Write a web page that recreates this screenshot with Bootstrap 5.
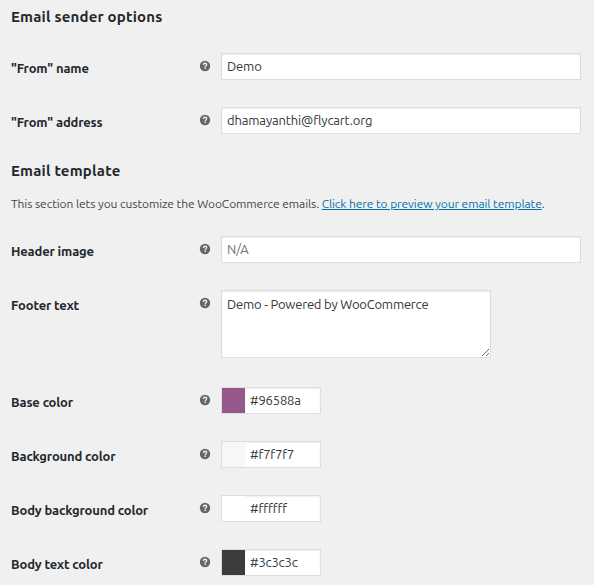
<!DOCTYPE html>
<html lang="en">
<head>
<meta charset="utf-8">
<meta name="viewport" content="width=device-width, initial-scale=1">
<title>Email settings</title>
<link href="https://cdn.jsdelivr.net/npm/bootstrap@5.3.0/dist/css/bootstrap.min.css" rel="stylesheet">
<style>
body { background: #f0f0f0; color: #23282d; font-family: Ubuntu, "Noto Sans", sans-serif; font-size: 13px; overflow: hidden; }
.settings { padding: 7px 13px 0 11px; }
.section-title { font-size: 15px; line-height: 20px; font-weight: 700; white-space: nowrap; letter-spacing: .19px; }
.fields { display: flex; flex-direction: column; gap: 27px; }
.field-label { width: 189px; font-size: 13px; line-height: 17px; padding-top: 7px; font-weight: 700; letter-spacing: -.15px; }
.help-tip { width: 21px; padding-top: 8px; line-height: 0; }
.help-tip svg { display: block; width: 10px; height: 10px; overflow: visible; }
.form-control.wc-input { height: 27px; padding: 1px 5px 2px; font-size: 13px; line-height: 20px; color: #32373c; border: 1px solid #ddd; border-radius: 0; background: #fff; box-shadow: inset 0 1px 2px rgba(0,0,0,.07); letter-spacing: -.14px; }
.form-control.wc-input::placeholder { color: #72777c; opacity: 1; }
textarea.form-control.wc-input { width: 270px; height: 68px; min-height: 0; padding-top: 3px; letter-spacing: -.2px; resize: both; flex: none; }
.color-field { width: 100px; }
.swatch { width: 24px; height: 27px; border: 1px solid #ddd; border-right: 0; flex: none; }
.color-field .form-control.wc-input { border-left: 0; letter-spacing: -.16px; }
.colors { margin-top: 29px; }
.description { font-size: 12px; line-height: 18px; padding: 14px 0 23px; color: #444; white-space: nowrap; letter-spacing: -.085px; }
.description a { color: #0073aa; }
.c-base { background: #96588a; } .c-back { background: #f7f7f7; } .c-body { background: #fff; } .c-text { background: #3c3c3c; }
.title-gap { margin-bottom: 26px; }
.title-template { margin: 27px 0 0; }
</style>
</head>
<body>
<svg width="0" height="0" class="position-absolute" aria-hidden="true">
  <symbol id="help" viewBox="0 0 10 10" overflow="visible"><circle cx="5" cy="5" r="5.2" fill="#666"/><path d="M3.4 3.9C3.4 2.8 4.1 2.2 5.1 2.2S6.7 2.8 6.7 3.6C6.7 4.7 5.2 4.7 5.2 6" fill="none" stroke="#f0f0f0" stroke-width="1.35"/><path d="M4.5 6.6h1.4V8H4.5z" fill="#f0f0f0"/></symbol>
</svg>
<main class="settings">
  <h2 class="section-title title-gap">Email sender options</h2>
  <div class="fields">
    <div class="d-flex align-items-start"><label class="field-label flex-shrink-0" for="f1">"From" name</label><span class="help-tip flex-shrink-0"><svg><use href="#help"/></svg></span><input id="f1" class="form-control wc-input" value="Demo"></div>
    <div class="d-flex align-items-start"><label class="field-label flex-shrink-0" for="f2">"From" address</label><span class="help-tip flex-shrink-0"><svg><use href="#help"/></svg></span><input id="f2" class="form-control wc-input" value="dhamayanthi@flycart.org" spellcheck="false"></div>
  </div>
  <h2 class="section-title title-template">Email template</h2>
  <p class="description m-0">This section lets you customize the WooCommerce emails. <a href="#">Click here to preview your email template</a>.</p>
  <div class="fields">
    <div class="d-flex align-items-start"><label class="field-label flex-shrink-0" for="f3">Header image</label><span class="help-tip flex-shrink-0"><svg><use href="#help"/></svg></span><input id="f3" class="form-control wc-input" placeholder="N/A"></div>
    <div class="d-flex align-items-start"><label class="field-label flex-shrink-0" for="f4">Footer text</label><span class="help-tip flex-shrink-0"><svg><use href="#help"/></svg></span><textarea id="f4" class="form-control wc-input" spellcheck="false">Demo - Powered by WooCommerce</textarea></div>
  </div>
  <div class="fields colors">
    <div class="d-flex align-items-start"><label class="field-label flex-shrink-0" for="f5">Base color</label><span class="help-tip flex-shrink-0"><svg><use href="#help"/></svg></span><div class="color-field d-flex"><span class="swatch c-base"></span><input id="f5" class="form-control wc-input" value="#96588a"></div></div>
    <div class="d-flex align-items-start"><label class="field-label flex-shrink-0" for="f6">Background color</label><span class="help-tip flex-shrink-0"><svg><use href="#help"/></svg></span><div class="color-field d-flex"><span class="swatch c-back"></span><input id="f6" class="form-control wc-input" value="#f7f7f7"></div></div>
    <div class="d-flex align-items-start"><label class="field-label flex-shrink-0" for="f7">Body background color</label><span class="help-tip flex-shrink-0"><svg><use href="#help"/></svg></span><div class="color-field d-flex"><span class="swatch c-body"></span><input id="f7" class="form-control wc-input" value="#ffffff"></div></div>
    <div class="d-flex align-items-start"><label class="field-label flex-shrink-0" for="f8">Body text color</label><span class="help-tip flex-shrink-0"><svg><use href="#help"/></svg></span><div class="color-field d-flex"><span class="swatch c-text"></span><input id="f8" class="form-control wc-input" value="#3c3c3c"></div></div>
  </div>
</main>
<script src="https://cdn.jsdelivr.net/npm/bootstrap@5.3.0/dist/js/bootstrap.bundle.min.js"></script>
</body>
</html>
